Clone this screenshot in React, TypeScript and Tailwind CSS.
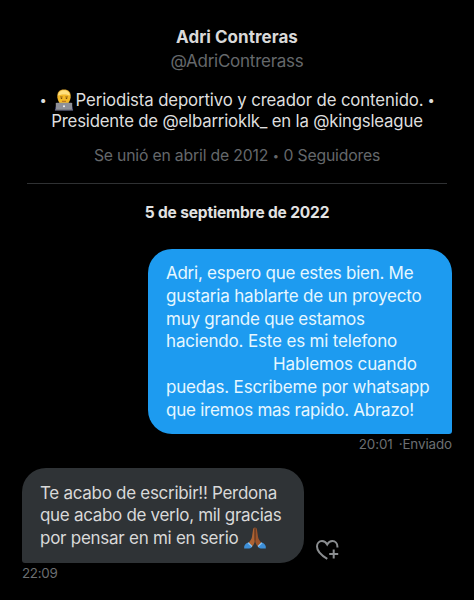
import { clsx } from 'clsx'

type Line = { text: string; className: string }

const sentLines: Line[] = [
  { text: 'Adri, espero que estes bien. Me', className: 'tracking-[-0.26px]' },
  { text: 'gustaria hablarte de un proyecto', className: 'tracking-[-0.17px]' },
  { text: 'muy grande que estamos', className: 'tracking-[-0.24px]' },
  { text: 'haciendo. Este es mi telefono', className: 'tracking-[-0.17px]' },
  { text: 'Hablemos cuando', className: 'pl-[107px] tracking-[-0.1px]' },
  { text: 'puedas. Escribeme por whatsapp', className: 'tracking-[-0.17px]' },
  { text: 'que iremos mas rapido. Abrazo!', className: 'tracking-[-0.25px]' },
]

const receivedLines: Line[] = [
  { text: 'Te acabo de escribir!! Perdona', className: 'tracking-[-0.29px]' },
  { text: 'que acabo de verlo, mil gracias', className: 'tracking-[-0.31px]' },
  { text: 'por pensar en mi en serio', className: 'tracking-[-0.26px]' },
]

function TechnologistEmoji() {
  return (
    <svg viewBox="0 0 20 22" className="h-[22px] w-5 shrink-0" aria-hidden="true">
      <path d="M.8 21.500c0-5 3-7 9.200-7s9.200 2 9.200 7z" fill="#20265c" />
      <path d="M3.300 8.500C2.900 3.200 5.500.6 10 .6s7.100 2.600 6.700 7.900l-.8 3h-11.800z" fill="#e2a92f" />
      <path d="M4.200 6.800C6.100 6 7.800 5.200 10 5.200s3.900.8 5.800 1.600v3.800c0 3-2.400 5-5.800 5s-5.800-2-5.800-5z" fill="#f3b927" />
      <path d="M3.900 6.600C4.500 2.800 6.800 1.200 10 1.200s5.500 1.600 6.100 5.400c-2-.7-3.900-1.200-6.100-1.200s-4.100.5-6.100 1.200z" fill="#ffe07c" />
      <path d="M6 7.900h2.700M11.300 7.900H14" stroke="#9a6413" strokeWidth="0.900" />
      <circle cx="7.500" cy="9.200" r="0.800" fill="#6b430f" />
      <circle cx="12.500" cy="9.200" r="0.800" fill="#6b430f" />
      <path d="M8 12.300h4" stroke="#a9621c" strokeWidth="0.900" />
      <rect x="1.800" y="13.700" width="16.400" height="7.300" rx="0.900" fill="#8e9098" />
      <rect x="1" y="20.200" width="18" height="1.200" rx="0.500" fill="#75777e" />
      <circle cx="10" cy="17.300" r="1" fill="#f3f4f8" />
    </svg>
  )
}

function PrayEmoji() {
  return (
    <svg viewBox="0 0 24 22" className="h-[22px] w-6 shrink-0" aria-hidden="true">
      <path d="M11.700.6c-1.100 0-1.500 1-1.700 2.400L9 9.800c-.3 2.200-1.900 4.500-3.900 6.500l3.400 3.900c2.100-1.700 3.300-4.100 3.300-7.200z" fill="#ad6232" />
      <path d="M12.300.6c1.100 0 1.500 1 1.700 2.400l1 6.800c.3 2.200 1.900 4.500 3.900 6.500l-3.400 3.900c-2.100-1.700-3.300-4.100-3.300-7.200z" fill="#9b532a" />
      <path d="M12 1.500v12" stroke="#5c2d18" strokeWidth="0.800" />
      <path d="M5.100 15.600l4 3.900c-.7 1.400-1.600 1.900-2.800 1.900H1.200c-.4-2.500.8-4.600 3.900-5.800z" fill="#3d8fd8" />
      <path d="M18.900 15.600l-4 3.900c.7 1.400 1.600 1.900 2.800 1.900h5.100c.4-2.500-.8-4.600-3.900-5.800z" fill="#3d8fd8" />
      <path d="M5.100 15.700L9 19.500M18.900 15.700L15 19.500" stroke="#8ac5f4" strokeWidth="1.200" />
    </svg>
  )
}

function HeartPlusIcon() {
  return (
    <svg viewBox="0 0 24 22" fill="none" stroke="#8b8e91" strokeWidth="2" className="h-[22px] w-6">
      <path d="M12.300 19.800C6 16.300 2 12.400 2 7.600 2 4.300 4.100 2.100 7 2.100c2.300 0 4 1.200 5.200 3.300 1.200-2.100 2.900-3.300 5.200-3.300 2.900 0 5 2.200 5 5.500v.8" />
      <path d="M18.700 10.600v9M14.200 15.100h9" />
    </svg>
  )
}

function MessageLines({ lines }: { lines: Line[] }) {
  return lines.map((line) => (
    <span key={line.text} className={clsx('block whitespace-nowrap', line.className)}>
      {line.text}
    </span>
  ))
}

export default function App() {
  return (
    <main className="flex h-[600px] w-[474px] flex-col overflow-hidden bg-black font-['Inter','Liberation_Sans',sans-serif]">
      <header className="mx-[27px] flex flex-col items-center whitespace-nowrap border-b border-[#2f3133] pt-[25px] pb-[17px]">
        <h1 className="text-[17px] leading-6 font-bold tracking-[0.04px] text-[#d9d9d9]">Adri Contreras</h1>
        <p className="text-[17px] leading-6 tracking-[-0.26px] text-[#65686b]">@AdriContrerass</p>
        <div className="mt-[17px] flex flex-col items-center text-[16.8px] leading-[21px] text-[#dedede]">
          <p className="flex h-[21px] items-center tracking-[-0.13px]">
            <span className="text-[13px]">•</span>
            <span className="mt-[-2px] mr-[2px] ml-[7px] flex">
              <TechnologistEmoji />
            </span>
            <span>Periodista deportivo y creador de contenido.</span>
            <span className="ml-[4px] text-[13px]">•</span>
          </p>
          <p className="tracking-[-0.2px]">Presidente de @elbarrioklk_ en la @kingsleague</p>
        </div>
        <p className="mt-[14px] text-[15.75px] leading-5 tracking-[-0.18px] text-[#65686b]">
          Se unió en abril de 2012 <span className="inline-block w-[7px] text-center align-[1px] text-[11px] leading-none">•</span> 0 Seguidores
        </p>
      </header>

      <section className="flex flex-col pr-[22px] pl-[22px]">
        <h2 className="mt-[19px] text-center text-[15.5px] leading-5 font-bold tracking-[-0.16px] text-[#e2e2e2]">
          5 de septiembre de 2022
        </h2>

        <div className="mt-[26px] h-[185px] w-[304px] self-end rounded-3xl rounded-br-[3px] bg-[#1d9bf0] pt-[13px] pl-[18px] text-[17px] leading-[22.8px] text-[#e6f7ff]">
          <MessageLines lines={sentLines} />
        </div>
        <div className="flex justify-end gap-[6px] text-[13.4px] leading-5 tracking-[-0.1px] text-[#6c6f72]">
          <span>20:01</span>
          <span>·Enviado</span>
        </div>

        <div className="mt-[14px] flex items-end">
          <div className="relative h-[95px] w-[282px] rounded-3xl rounded-bl-[3px] bg-[#2f3336] pt-[13.5px] pl-[18px] text-[17px] leading-[22.8px] text-[#d9d9d9]">
            <MessageLines lines={receivedLines} />
            <span className="absolute top-[59px] left-[221px]">
              <PrayEmoji />
            </span>
          </div>
          <button type="button" aria-label="Me gusta" className="mb-[2px] ml-[11px]">
            <HeartPlusIcon />
          </button>
        </div>
        <p className="text-[13.4px] leading-5 tracking-[-0.3px] text-[#6c6f72]">22:09</p>
      </section>
    </main>
  )
}
